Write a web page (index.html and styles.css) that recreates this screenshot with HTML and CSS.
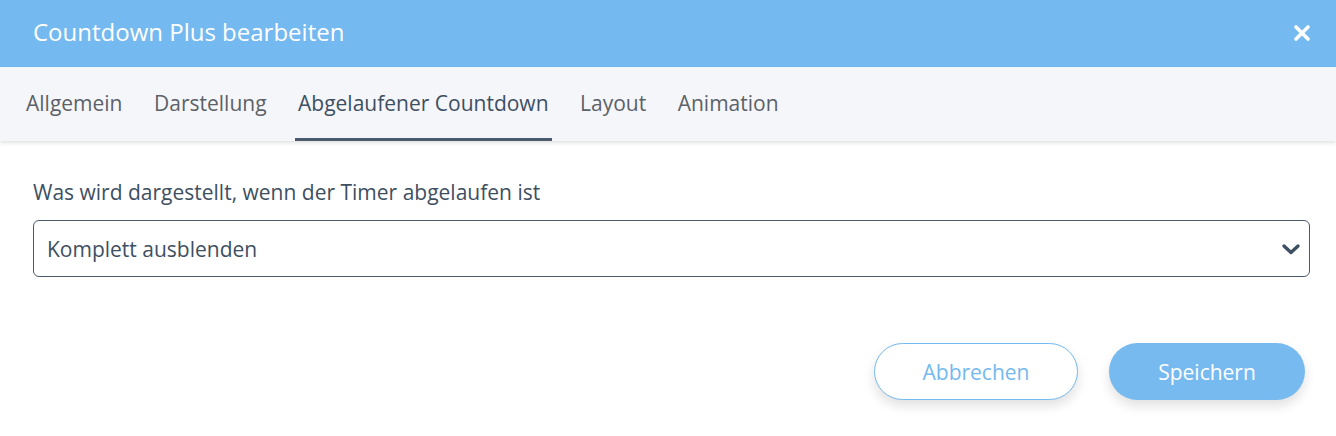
FILE: index.html
```html
<!DOCTYPE html>
<html lang="de">
<head>
<meta charset="utf-8">
<link rel="stylesheet" href="styles.css">
</head>
<body>
<div class="dialog">
  <header class="head">
    <h1 class="title">Countdown Plus bearbeiten</h1>
    <svg class="close" width="18" height="18" viewBox="0 0 18 18"><path d="M3 3L15 15M15 3L3 15" stroke="#fff" stroke-width="3.6" stroke-linecap="round"/></svg>
  </header>
  <nav class="tabs">
    <span class="tab">Allgemein</span>
    <span class="tab">Darstellung</span>
    <span class="tab active">Abgelaufener Countdown</span>
    <span class="tab">Layout</span>
    <span class="tab">Animation</span>
  </nav>
  <main class="body">
    <label class="label">Was wird dargestellt, wenn der Timer abgelaufen ist</label>
    <div class="select">
      <span>Komplett ausblenden</span>
      <svg width="20" height="12" viewBox="0 0 20 12"><path d="M3 3L10 9.5L17 3" fill="none" stroke="#3e4f62" stroke-width="3.4" stroke-linecap="round" stroke-linejoin="round"/></svg>
    </div>
    <div class="actions">
      <button class="btn ghost">Abbrechen</button>
      <button class="btn primary">Speichern</button>
    </div>
  </main>
</div>
</body>
</html>
```
FILE: styles.css
```css
* { box-sizing: border-box; }
html, body { margin: 0; padding: 0; background: #fff; }
body { font-family: "Open Sans", "Noto Sans", sans-serif; width: 1336px; height: 436px; overflow: hidden; }
.dialog { display: flex; flex-direction: column; }
.head {
  height: 67px; background: #74b9ef; display: flex; align-items: center; justify-content: space-between;
  padding: 0 25px 4px 33px;
}
.title { margin: 0; font-size: 24px; font-weight: 400; color: #fff; line-height: 30px; }
.close { display: block; margin-top: 2px; }
.tabs {
  height: 74px; background: #f5f6fa; display: flex; align-items: stretch; gap: 25.5px;
  padding: 0 0 0 23px; box-shadow: 0 2px 4px rgba(0,0,0,0.12); position: relative; z-index: 1;
}
.tab {
  font-size: 21px; color: #5c6168; padding: 0 3px; display: flex; align-items: center; padding-top: 1px;
  border-bottom: 3px solid transparent;
}
.tab.active { color: #3e4f62; border-bottom-color: #4a5b6e; }
.body { padding: 37px 26px 0 33px; }
.label { display: block; font-size: 21px; color: #3e4f62; line-height: 28px; }
.select {
  margin-top: 14px; height: 57px; border: 1px solid #4a5a6b; border-radius: 6px; display: flex;
  align-items: center; justify-content: space-between; padding: 0 8px 0 13px; font-size: 21px; color: #3e4f62;
}
.actions { display: flex; justify-content: flex-end; gap: 31px; margin-top: 66px; padding-right: 5px; }
.btn {
  height: 57px; border-radius: 29px; font-family: inherit; font-size: 21px; padding: 0; cursor: pointer;
  box-shadow: 0 6px 12px rgba(0,0,0,0.12);
}
.ghost { width: 204px; background: #fff; border: 1px solid #74b9ef; color: #74b9ef; }
.primary { width: 196px; background: #77baf0; border: 0; color: #fff; }
```
